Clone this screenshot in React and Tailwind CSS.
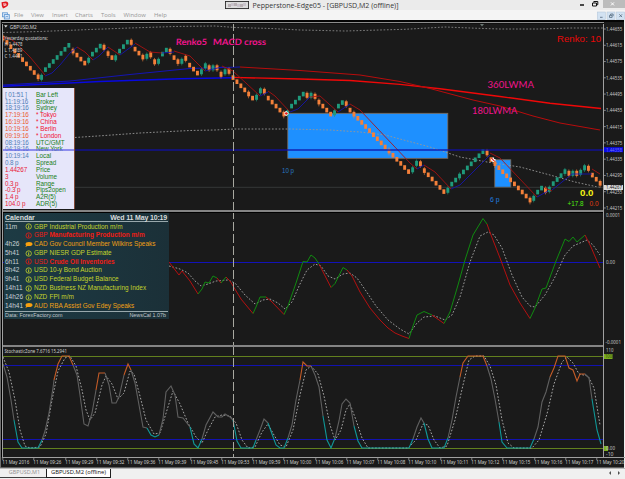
import React from "react";

const ORANGE = "#f4803a";
const GREEN = "#1f9a7c";
const RED = "#b01010";
const BLUE = "#1414b4";

// Renko bricks in runs: [first x, first y, count, y step, colour]
const RUNS = [
  [3, 38, 10, 4.3, "o"], [41.5, 77, 1, 0, "g"], [45.4, 69.5, 7, -4.05, "g"], [73, 51, 4, 4, "o"],
  [88.6, 60, 1, 0, "g"], [92.4, 54, 3, -4, "g"], [104, 47, 1, 0, "o"], [108, 53.5, 2, 4, "o"],
  [115.6, 57.5, 1, 0, "g"], [119.5, 51, 3, -4.5, "g"], [131.2, 42, 1, 0, "o"], [135, 49, 3, 4, "o"],
  [146.8, 56, 1, 0, "g"], [150.7, 54.5, 1, 0, "o"], [154.6, 61.5, 1, 0, "o"], [158.5, 61, 1, 0, "g"],
  [162.4, 54, 2, -4, "g"], [170.1, 51, 1, 0, "o"], [174, 57.5, 2, 4, "o"], [181.8, 61, 1, 0, "g"],
  [185.7, 58, 1, 0, "o"], [189.6, 65, 3, 4, "o"], [201.4, 71.5, 1, 0, "g"], [205.3, 65.5, 1, 0, "g"],
  [209.1, 67.5, 1, 0, "o"], [213, 67.5, 1, 0, "g"], [217, 67.5, 1, 0, "o"], [221, 74, 1, 0, "o"],
  [225, 71.5, 1, 0, "g"], [229, 71, 1, 0, "o"], [233, 77.5, 6, 4.1, "o"], [256.5, 97, 1, 0, "g"],
  [260.4, 90.5, 1, 0, "g"], [264.3, 91, 1, 0, "o"], [268.2, 98, 5, 4, "o"], [287.6, 112.5, 1, 0, "g"],
  [291.5, 106, 4, -4, "g"], [307, 95, 1, 0, "o"], [311, 95, 1, 0, "g"], [315, 96, 1, 0, "o"],
  [318.9, 102, 4, 4, "o"], [334.5, 112.5, 1, 0, "g"], [338.4, 106, 2, -3.5, "g"], [346.2, 103.5, 1, 0, "o"],
  [350, 110, 16, 4.1, "o"], [412.6, 169.5, 1, 0, "g"], [416.5, 163, 1, 0, "g"], [420.4, 163.5, 1, 0, "o"],
  [424.3, 170.5, 6, 4.2, "o"], [447.8, 190, 1, 0, "g"], [451.7, 184, 9, -4.05, "g"], [487, 152.5, 1, 0, "o"],
  [491, 159.5, 11, 4.05, "o"], [533.7, 198, 1, 0, "g"], [537.6, 192, 2, -4, "g"], [545.4, 190, 1, 0, "o"],
  [549.3, 189, 1, 0, "g"], [553.2, 183.5, 4, -4, "g"], [568.9, 173, 1, 0, "o"], [572.8, 173, 1, 0, "g"],
  [576.7, 173, 1, 0, "o"], [580.6, 172, 1, 0, "g"], [584.5, 167.5, 1, 0, "g"], [588.4, 168, 1, 0, "o"],
  [592.3, 175, 3, 4.1, "o"],
];

const AVERAGES = [
  ["r", "3,38 9,38 15,42 30,57 45,75"], ["b", "45,76 52,73 60,65 70,53 77,47"], ["r", "77,47 85,52 93,60"],
  ["b", "93,60 99,56 108,47"], ["r", "108,47 120,55"], ["b", "120,55 135,44"], ["r", "135,43 150,52 162,53"],
  ["b", "162,53 174,52"], ["r", "174,51 190,56 205,71"], ["b", "205,71 222,67"], ["r", "222,66 233,71 260,96"],
  ["b", "260,96 268,92"], ["r", "268,91 275,96 290,112"], ["b", "290,112 298,109 310,97"],
  ["r", "310,97 320,96 338,112"], ["b", "338,112 350,104"], ["r", "350,104 360,110 410,163 417,169"],
  ["b", "417,169 424,165"], ["r", "424,165 435,172 451,189"], ["b", "451,189 460,185 490,155"],
  ["r", "490,153 500,158 537,197"], ["b", "537,197 548,191"], ["r", "545,188 552,191"],
  ["b", "552,190 572,174 592,174"], ["r", "592,169 600,174"],
];

const MACD = [
  ["r", "169,262 179,275 182,271 190,281 198,294"], ["g", "198,294 202,289 205,282 209,283 213,276 217,278"],
  ["r", "217,278 221,283"], ["g", "221,283 226,277"], ["r", "226,277 230,281 241,299 253,313.5"],
  ["g", "253,313.5 256,307 260,297 266,297"], ["r", "266,297 271,301 284,314.5"],
  ["g", "284,314.5 288,306 296,283 303,261.5 307,262 311,255 315,258 319,264"], ["r", "319,264 331,287.5"],
  ["g", "331,287.5 335,283.5 343,267.5 347,270"],
  ["r", "347,270 352,276 360,292 370,308 380,320 388,328 395,333 402,336 409,338.5"],
  ["g", "409,338.5 413,326 417,315 424,311.5 432,315"], ["r", "432,315 444,323.5"],
  ["g", "444,323.5 450,312 458,285 465,260 473,235 483,218.5 487,224"],
  ["r", "487,224 491,235 500,258 510,285 520,303 530,318.5"],
  ["g", "530,318.5 535,308 542,289 546,288 556,261 565,239 569,241.5 573,237 577,242 585,235"],
  ["r", "585,235 591,247 600,268"],
];

const STOCH = [
  ["w", "3,364 7,377 11,400 14,420"], ["t", "14,420 18,442 22,448 38,448 42,440"],
  ["w", "42,440 45,431 49,413 53,388 54,380"], ["o", "54,380 58,364 62,356 69,356 73,365"],
  ["w", "73,365 77,375 80,395 84,424 88,426 92,413 96,390"], ["o", "96,390 99,373 105,373"],
  ["w", "105,373 109,385 112,403 116,403 119,397 124,375"], ["o", "124,375 128,364 131,370"],
  ["w", "131,370 135,383 139,405 143,427 147,428"], ["t", "147,428 151,435 155,437 159,435"],
  ["w", "159,435 163,419 166,392 171,386 175,395 178,417 183,418 190,427"],
  ["t", "190,427 194,444 198,448 202,439"], ["w", "202,439 206,425 213,412 218,417 222,417 225,414 230,417 233,420"],
  ["t", "233,420 237,441 241,448 253,448 256,440"], ["w", "256,440 260,430 264,419 268,423"],
  ["t", "268,423 272,434 276,445 280,448 284,448 288,438"], ["w", "288,438 292,425 296,400 300,380"],
  ["o", "300,380 303,362 307,366 311,366"], ["w", "311,366 315,375 319,387 323,416"],
  ["t", "323,416 327,440 331,448 335,438"], ["w", "335,438 339,421 342,404 346,399 350,403 354,426"],
  ["t", "354,426 358,441 362,448 409,448 413,439"], ["w", "413,439 417,427 421,418 424,423"],
  ["t", "424,423 428,439 432,448 444,448 448,438"], ["w", "448,438 452,420 456,397 460,377"],
  ["o", "460,377 463,363 468,356 483,356 487,366"], ["w", "487,366 491,379 495,399 499,422"],
  ["t", "499,422 502,442 507,448 530,448 534,439"], ["w", "534,439 538,427 542,402 546,392 550,377"],
  ["o", "550,377 554,368 558,356 565,356 569,368 573,370 577,381 580,374 585,374"],
  ["w", "585,374 589,378 592,399"], ["t", "592,399 597,430 601,444"],
];

function Lines({ data, colors, width = 1 }) {
  return data.map(([c, pts], i) => (
    <polyline key={i} points={pts} fill="none" stroke={colors[c]} strokeWidth={width} />
  ));
}

function Dotted({ points, color = "#a8a8a8" }) {
  return <polyline points={points} fill="none" stroke={color} strokeWidth="0.9" strokeDasharray="1.7 1.7" />;
}

function Cursor({ from, to }) {
  return <line x1="233.5" x2="233.5" y1={from} y2={to} stroke="#a8a8a0" strokeWidth="1" strokeDasharray="9 3" />;
}

function Note({ x, y, w, size, fill, children, family = "Lato, sans-serif", weight }) {
  return (
    <text x={x} y={y} textLength={w} lengthAdjust="spacingAndGlyphs" fontSize={size} fill={fill} fontFamily={family} fontWeight={weight} xmlSpace="preserve">
      {children}
    </text>
  );
}

const ARIAL = "'Liberation Sans', sans-serif";
const TAHOMA = "'Noto Sans', sans-serif";

function PriceChart() {
  const bricks = RUNS.flatMap(([x, y, n, dy, c]) =>
    Array.from({ length: n }, (_, i) => ({ x: x + i * 3.9, y: y + i * dy, c, single: n === 1 }))
  );
  return (
    <svg className="block h-[186px] w-[600px]" viewBox="3 24 600 186">
      <rect x="287.8" y="113.3" width="160" height="45" fill="#1e90ff" stroke="#806c58" strokeWidth="0.8" />
      <rect x="494.8" y="159.8" width="16" height="27.5" fill="#1e90ff" stroke="#806c58" strokeWidth="0.8" />
      <Dotted points="3,32.5 40,31.5 90,29.5 130,28 175,26.5 215,26 235,27.5 270,28.5 300,30 345,31 380,30 405,29.3 445,27 475,28.2 500,29 540,29 570,28 603,28" color="#858585" />
      <Dotted points="75,137.5 105,135.5 140,133 190,130.5 215,130 234,129 290,129 330,130 360,132 385,135 400,139 430,147 460,157 487,162 520,167 550,175 575,182 600,187.5" color="#969696" />
      <line x1="3" x2="603" y1="187.3" y2="187.3" stroke="#3c4040" strokeWidth="0.8" />
      <polyline points="3,86.3 100,81.5 180,78.8 233,77.8" fill="none" stroke="#0808e0" strokeWidth="1.4" />
      <polyline points="233,77.4 300,79 350,80.5 400,84.4 440,88.8 500,96.5 550,103.2 601,108.5" fill="none" stroke="#f00808" strokeWidth="1.4" />
      <polyline points="3,85 70,81 130,74.5 190,68.5 240,67" fill="none" stroke={BLUE} />
      <polyline points="240,67 300,70.5 360,75 400,81.5 430,88.5 473,100 500,106 533,116 560,123 600,130" fill="none" stroke="#b80c0c" />
      {bricks.map((b, i) => (
        <g key={i} fill={b.c === "o" ? ORANGE : GREEN}>
          {(b.single || i % 9 === 0) && <rect x={b.x - 0.4} y={b.y - 3.6} width="0.8" height="8" opacity="0.75" />}
          <rect x={b.x - 1.4} y={b.y - 2.2} width="2.9" height={b.single ? 5 : 4.6} />
        </g>
      ))}
      <Lines data={AVERAGES} colors={{ r: RED, b: BLUE }} width={0.85} />
      <line x1="3" x2="603" y1="150" y2="150" stroke="#1010a8" strokeWidth="1.5" opacity="0.85" />
      <Cursor from={22} to={210} />
      <g strokeWidth="1.1">
        <path d="M284 113.5h4.5M286.2 111.3v4.4" stroke="#fff" strokeWidth="2" />
        <path d="M284.6 113.5h3.2M286.2 112v3" stroke="#e02020" />
        <path d="M491 159.8h4.5M493.2 157.6v4.4" stroke="#fff" strokeWidth="1.8" />
        <path d="M491.6 158.4l2.8 2.8" stroke="#e02020" />
      </g>
      <path d="M4 25.2h3.6l-1.8 2.4z" fill="#ddd" />
      <path d="M480 24h4l-2 2.4z" fill="#6a7672" />
      <Note x={9.8} y={28.5} w={27} size={5.4} fill="#d0d0d0" family={TAHOMA}>GBPUSD,M2</Note>
      <Note x={4.5} y={40.2} w={43.5} size={5.2} fill="#d0d0d0" family={TAHOMA}>Yesterday quotations:</Note>
      <Note x={4.5} y={46.2} w={18} size={5} fill="#d0d0d0" family={TAHOMA}>H 1.4478</Note>
      <Note x={4.5} y={52} w={18} size={5} fill="#d0d0d0" family={TAHOMA}>L 1.4389</Note>
      <Note x={4.5} y={57.8} w={18} size={5} fill="#d0d0d0" family={TAHOMA}>C 1.4441</Note>
      <g transform="translate(2.2 0) skewX(-3)">
        <Note x={176} y={44.6} w={31} size={8.8} fill="#f0148c" weight="700">Renko5</Note>
        <Note x={213} y={44.6} w={53} size={8.8} fill="#f0148c" weight="700">MACD cross</Note>
      </g>
      <Note x={487.5} y={87.7} w={46.5} size={9.6} fill="#f0148c">360LWMA</Note>
      <Note x={472} y={114.4} w={45.5} size={9.6} fill="#f0148c">180LWMA</Note>
      <Note x={557} y={41.7} w={44} size={9.6} fill="#e80808" family={ARIAL}>Renko: 10</Note>
      <Note x={282} y={172.5} w={12} size={7} fill="#2878c4" family={ARIAL}>10 p</Note>
      <Note x={490} y={202} w={9.5} size={7} fill="#2080e0" family={ARIAL}>6 p</Note>
      <Note x={580} y={196.2} w={13.5} size={9.8} fill="#f4f414" family={ARIAL} weight="700">0.0</Note>
      <Note x={567.5} y={206.4} w={16} size={6.8} fill="#50f010" family={ARIAL}>+17.8</Note>
      <Note x={589.5} y={206.4} w={9} size={6.8} fill="#e03c10" family={ARIAL}>0.0</Note>
    </svg>
  );
}

function MacdChart() {
  return (
    <svg className="block h-[133px] w-[600px]" viewBox="3 213 600 133">
      <line x1="3" x2="603" y1="262.5" y2="262.5" stroke="#1212b8" strokeWidth="1" />
      <Dotted points="169,266 180,269 188,273 195,281 201,286 208,284 216,281 228,280 235,283 245,295 255,304 263,300 270,299 278,303 285,309 292,302 300,284 307,270 315,264 321,266 328,276 335,279 343,274 350,273 357,278 366,291 376,306 388,320 400,329 409,334 417,323 424,317 435,316 445,320 452,315 460,297 470,262 480,236 488,232 494,235 502,248 512,275 522,297 530,306 535,307 545,295 555,277 565,255 573,246 587,240 593,245 600,255" />
      <Lines data={MACD} colors={{ r: "#b41010", g: "#108a10" }} />
      <Cursor from={210} to={345} />
    </svg>
  );
}

function StochasticChart() {
  return (
    <svg className="block h-[110px] w-[600px]" viewBox="3 347 600 110">
      <line x1="3" x2="603" y1="365.5" y2="365.5" stroke="#1212b0" strokeWidth="1" />
      <line x1="3" x2="603" y1="439.5" y2="439.5" stroke="#1212b0" strokeWidth="1" />
      <line x1="3" x2="603" y1="356.5" y2="356.5" stroke="#62801e" />
      <line x1="3" x2="603" y1="448.5" y2="448.5" stroke="#62801e" />
      <Dotted points="3,357 9,372 15,400 20,430 25,446 30,448 40,447 46,434 52,400 58,371 65,358 70,356 76,366 82,390 86,410 90,420 95,413 102,385 106,376 112,384 118,399 124,393 130,371 134,374 140,396 146,420 154,434 160,433 167,410 173,391 180,404 188,423 196,437 202,443 208,430 215,417 222,415 230,416 236,423 242,440 248,448 255,447 262,432 268,424 274,435 280,445 286,447 293,430 300,395 306,370 311,366 318,374 324,396 330,425 335,440 341,430 346,410 350,404 356,420 362,438 368,448 408,448 416,440 423,424 428,425 434,440 440,448 447,446 455,420 463,385 469,360 475,356 484,356 490,366 496,385 502,420 508,443 514,448 532,448 539,440 547,414 554,384 562,362 567,357 573,363 579,374 588,376 594,388 600,425" color="#b4b4b4" />
      <Lines data={STOCH} colors={{ w: "#606060", o: "#c45c28", t: "#109898" }} width={1.1} />
      <Cursor from={346} to={457} />
      <Note x={4.5} y={353} w={62.5} size={5.2} fill="#d0d0d0" family={TAHOMA}>StochasticZone 7.6716 15.2941</Note>
    </svg>
  );
}

const INFO = [
  ["[ 01:51 ]", "Bar Left"], ["11:19:16", "Broker"], ["18:19:16", "Sydney"], ["17:19:16", "* Tokyo", 1],
  ["16:19:16", "* China", 1], ["10:19:16", "* Berlin", 1], ["09:19:16", "* London", 1], ["08:19:16", "UTC/GMT"],
  ["04:19:16", "New York"], ["10:19:14", "Local"], ["0.8 p", "Spread"], ["1.44267", "Price", 2],
  ["3", "Volume", 2], ["0.3 p", "Range", 2], ["-0.3 p", "Pips2open", 2], ["1.4 p", "A2R(5)", 2], ["104.0 p", "ADR(5)", 2],
];

function InfoBox() {
  return (
    <div className="absolute left-0 top-[64px] flex h-[121px] w-[71.5px] flex-col border-r border-[#804838] bg-[#e6e6fa] pl-[2px] pt-[3.5px] font-['Liberation_Sans',sans-serif] text-[6.3px]">
      {INFO.map(([value, label, kind]) => (
        <div key={label} className="flex h-[6.84px] items-center leading-none whitespace-nowrap">
          <span className={"w-[31px] tracking-[-0.1px] " + (kind === 1 ? "text-[#ec5a32]" : kind === 2 ? "text-[#e81838]" : "text-[#5080b8]")}>{value}</span>
          <span className={kind === 1 ? "text-[#f01030]" : "text-[#188018]"}>{label}</span>
        </div>
      ))}
      <div className="absolute left-0 top-[61px] h-[1.5px] w-full bg-[#6868e8]/70" />
    </div>
  );
}

const NEWS = [
  ["11m", "GBP", "Industrial Production m/m", "y"], ["", "GBP", "Manufacturing Production m/m", "r"],
  ["4h26", "CAD", "Gov Council Member Wilkins Speaks", "o"], ["5h41", "GBP", "NIESR GDP Estimate", "y"],
  ["6h11", "USD", "Crude Oil Inventories", "r"], ["8h42", "USD", "10-y Bond Auction", "y"],
  ["9h41", "USD", "Federal Budget Balance", "y"], ["14h11", "NZD", "Business NZ Manufacturing Index", "y"],
  ["14h26", "NZD", "FPI m/m", "y"], ["14h41", "AUD", "RBA Assist Gov Edey Speaks", "o"],
];
const NEWS_TEXT = {
  y: "text-[#c4d42c]",
  r: "text-[#f01c14]",
  o: "text-[#f0a014]",
};

function NewsIcon({ kind }) {
  if (kind === "o") {
    return (
      <svg className="h-[7px] w-[9px] shrink-0" viewBox="0 0 9 7" fill="#f8a010">
        <ellipse cx="4" cy="3" rx="3.5" ry="2" />
        <path d="M1.4 3.6L.4 6l3-1.4z" />
      </svg>
    );
  }
  return (
    <svg className="h-[7px] w-[9px] shrink-0" viewBox="0 0 9 7" fill="none" stroke={kind === "r" ? "#f01c14" : "#c4d42c"}>
      <circle cx="3.7" cy="3.5" r="2.7" strokeWidth="0.8" />
      <path d="M3.7 1.8v.8M3.7 3.1v2.2" strokeWidth="1" />
    </svg>
  );
}

function Calendar() {
  return (
    <div className="absolute left-px top-0 flex h-[106px] w-[165px] flex-col bg-gradient-to-r from-[#1d3b44] to-[#1b3038] px-[1px] font-['Liberation_Sans',sans-serif] leading-none whitespace-nowrap">
      <div className="flex h-[9px] shrink-0 items-center justify-between border-b border-[#98a8ac] pt-px text-[7px] font-bold text-[#d8dcdc]">
        <span className="tracking-[-0.02px]">Calendar</span>
        <span className="pr-px tracking-[-0.17px]">Wed 11 May 10:19</span>
      </div>
      <div className="flex grow flex-col pt-[0.5px]">
        {NEWS.map(([time, cur, title, kind]) => (
          <div key={title} className={"flex h-[8.77px] items-center text-[6.45px] " + NEWS_TEXT[kind]}>
            <span className="w-[20px] shrink-0 text-[6.5px] text-[#c8d0d4]">{time}</span>
            <NewsIcon kind={kind} />
            <span className="w-[15.5px] shrink-0">{cur}</span>
            <span className={kind === "r" ? "font-bold" : ""}>{title}</span>
          </div>
        ))}
      </div>
      <div className="flex h-[8px] shrink-0 items-center justify-between border-t border-[#98a8ac] pr-[2px] text-[5.4px] text-[#c0c8cc]">
        <span>Data: ForexFactory.com</span>
        <span>NewsCal 1.07b</span>
      </div>
    </div>
  );
}

const PRICES = ["1.44655", "1.44615", "1.44575", "1.44535", "1.44495", "1.44455", "1.44415", "1.44375", "1.44335", "1.44295", "1.44255", "1.44215"];

function AxisLabel({ y, children, fill = "#c4c4c4" }) {
  const width = { 7: 16.3, 6: 14, 4: 9, 3: 7.5 }[children.length];
  return (
    <g>
      {children.length === 7 && <path d={"M0 " + y + "h1.8"} stroke="#a0a0a0" strokeWidth="0.8" />}
      <Note x={2} y={y + 1.9} w={width} size={5} fill={fill} family={TAHOMA}>{children}</Note>
    </g>
  );
}

function PriceAxis() {
  return (
    <svg className="block h-[433px] w-[19px] shrink-0 overflow-visible" viewBox="0 24 19 433">
      {PRICES.map((p, i) => <AxisLabel key={p} y={29 + i * 16.27}>{p}</AxisLabel>)}
      <rect x="0" y="147.2" width="19" height="5" fill="#0808e8" />
      <Note x={2} y={151.6} w={16} size={5} fill="#7474f0" family={TAHOMA}>1.44358</Note>
      <rect x="0" y="185" width="19" height="5" fill="#dcdcdc" />
      <Note x={2} y={189.3} w={16} size={5} fill="#202020" family={TAHOMA}>1.44267</Note>
      <AxisLabel y={215}>0.0001</AxisLabel>
      <AxisLabel y={262.3}>0.00</AxisLabel>
      <Note x={1.5} y={344} w={15.5} size={5} fill="#c4c4c4" family={TAHOMA}>-0.0001</Note>
      <AxisLabel y={350}>110</AxisLabel>
      <rect x="0" y="354" width="8.5" height="5" fill="#7cb01c" />
      <Note x={1} y={358.3} w={7} size={5} fill="#303818" family={TAHOMA}>100</Note>
      <rect x="0" y="446" width="4" height="5" fill="#7cb01c" />
      <AxisLabel y={448.4}>0.00</AxisLabel>
      <AxisLabel y={454.4}>-10</AxisLabel>
    </svg>
  );
}

const TIMES = ["2016", "09:26", "09:29", "09:32", "09:36", "09:39", "09:45", "09:53", "09:59", "10:00", "10:06", "10:07", "10:08", "10:10", "10:11", "10:12", "10:15", "10:16", "10:17", "10:20"];

const MENU = [
  ["File", "w-[17px]"], ["View", "w-[21px]"], ["Insert", "w-[23px]"], ["Charts", "w-[26px]"],
  ["Tools", "w-[22.5px]"], ["Window", "w-[30.5px]"], ["Help", "w-[14px]"],
];

function TitleBar() {
  return (
    <header className="flex h-[10px] items-start bg-[#ebebeb]">
      <svg className="mt-px ml-px h-[8px] w-[8px]" viewBox="0 0 8 8">
        <path d="M.5 1.2L4.8.6q2.6.2 2.5 2.6Q7 6 4.2 6.4L2 7.6.9 5z" fill="#e01820" />
        <path d="M2 3h3.2M2.6 4.6l2.8-.8" stroke="#fff" strokeWidth="0.9" />
      </svg>
      <svg className="mt-px ml-[216px] h-[8px] w-[24px]" viewBox="0 0 24 8">
        <rect x=".4" y=".4" width="23.2" height="7.2" fill="#dcdcdc" stroke="#222" strokeWidth=".9" />
        <path d="M3 3h3v3H3zM9 2h3v3H9zM15 3h3v3h-3z" fill="#b8b0b4" />
        <path d="M6 2h3v3H6zM12 3h3v3h-3zM18 2h3v3h-3z" fill="#cac4cc" />
      </svg>
      <svg className="ml-[2px] h-[10px] w-[148px] overflow-visible" viewBox="0 0 148 10">
        <Note x={1.5} y={7.6} w={146} size={7.4} fill="#383838" family="'Open Sans', sans-serif">Pepperstone-Edge05 - [GBPUSD,M2 (offline)]</Note>
      </svg>
      <svg className="ml-auto h-[9px] w-[46px]" viewBox="0 0 46 9">
        <rect x="24" width="22" height="8" fill="#bcbcbc" />
        <path d="M1 5h4" stroke="#111" strokeWidth="1.5" />
        <path d="M13.5 3h4v3h-4zM14.8 2.5v-1h4v3.2h-1" fill="none" stroke="#111" strokeWidth="1" />
        <path d="M32 2.4l3 3M35 2.4l-3 3" stroke="#fff" strokeWidth="1" />
      </svg>
    </header>
  );
}

function MenuBar() {
  return (
    <nav className="flex h-[10px] items-center bg-[#f4f4f4] pt-px font-['Open_Sans',sans-serif] text-[5.9px] leading-none text-[#969696]">
      <svg className="ml-[2px] mr-[4px] h-[8px] w-[8px] shrink-0" viewBox="0 0 8 8" fill="#d8e8fa" stroke="#5c94d0" strokeWidth=".8">
        <rect x=".5" y=".8" width="5" height="4" />
        <rect x="2.3" y="2.6" width="5" height="4.4" />
        <path d="M3.2 5.5l1-1.2 1 .8 1-1.4" fill="none" />
      </svg>
      {MENU.map(([label, width]) => <span key={label} className={"shrink-0 " + width}>{label}</span>)}
      <svg className="ml-auto h-[9px] w-[28px]" viewBox="0 0 28 9">
        <g fill="#d2e2f2" stroke="#b0c4d8" strokeWidth=".5">
          <rect x=".3" y="1" width="8" height="7.6" /><rect x="10" y="1" width="8" height="7.6" /><rect x="19.7" y="1" width="8" height="7.6" />
        </g>
        <path d="M3 6.3h2.6M12.5 4.4h2.6v2h-2.6zM13.6 4V3h2.5v2.2M22.3 3.3l2.8 2.8M25.1 3.3l-2.8 2.8" fill="none" stroke="#52687c" strokeWidth=".8" />
      </svg>
    </nav>
  );
}

export default function App() {
  return (
    <div className="flex h-[479px] w-[625px] flex-col overflow-hidden bg-[#f0f0f0]">
      <TitleBar />
      <MenuBar />
      <main className="flex h-[448px] w-[624px] shrink-0 flex-col border-l border-[#707070] bg-[#1a1a1a]">
        <div className="h-[2px] shrink-0 bg-[#050505]" />
        <div className="ml-px h-[2px] w-[602px] shrink-0 border-t border-[#8c8c8c] bg-[#101010]" />
        <div className="flex h-[433px] shrink-0 border-l border-black">
          <div className="flex w-[602px] shrink-0 flex-col border-l border-r border-[#a0a0a0]">
            <section className="relative h-[186px] shrink-0">
              <PriceChart />
              <InfoBox />
            </section>
            <div className="h-[2px] shrink-0 bg-[#848484]" />
            <section className="relative h-[133px] shrink-0 overflow-hidden border-t border-black">
              <MacdChart />
              <Calendar />
            </section>
            <div className="h-[2px] shrink-0 bg-[#848484]" />
            <section className="h-[110px] shrink-0">
              <StochasticChart />
            </section>
          </div>
          <PriceAxis />
        </div>
        <div className="ml-px flex h-[10px] w-[623px] shrink-0 overflow-hidden border-t border-[#a0a0a0]">
          {TIMES.map((t, i) => (
            <svg key={i} className="h-[9px] w-[31.27px] shrink-0 overflow-visible" viewBox="0 0 31.27 9">
              <path d="M.8 0v2" stroke="#a0a0a0" strokeWidth=".8" />
              <Note x={0.3} y={6.4} w={i === 0 ? 27 : 28} size={5.3} fill="#d0d0d0" family={TAHOMA}>{"11 May " + t}</Note>
            </svg>
          ))}
        </div>
        <div className="h-px shrink-0 bg-[#606060]" />
      </main>
      <footer className="flex h-[11px] shrink-0 items-start border-t border-[#b8b8b8] bg-[#f0f0f0] font-['Open_Sans',sans-serif] leading-none">
        <div className="flex h-[9px] w-[46px] items-center justify-center border-b border-[#404040] pl-[3px] text-[5.5px] text-[#909090]">GBPUSD,M1</div>
        <div className="flex h-[9px] w-[65px] items-center justify-center border border-t-0 border-[#202020] bg-white text-[5.8px] text-[#101010]">
          GBPUSD,M2 (offline)
        </div>
        <svg className="ml-auto mr-[3px] h-[8px] w-[14px]" viewBox="0 0 14 8" fill="#505050">
          <path d="M3 2v4L1 4zM10 2v4l2-2z" />
        </svg>
      </footer>
    </div>
  );
}
